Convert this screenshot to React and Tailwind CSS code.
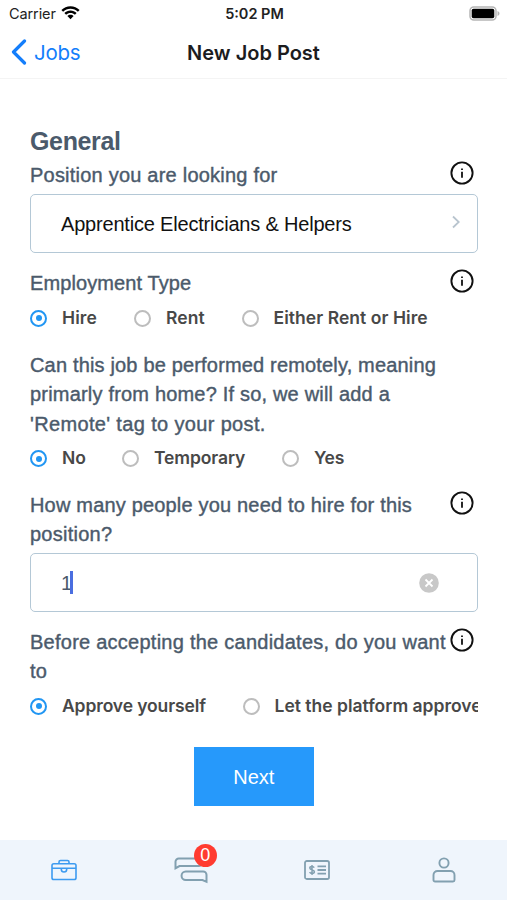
import React from 'react';

const labelText =
  "font-['Liberation_Sans',sans-serif] text-[20px] leading-[29.3px] text-[#4b5a6b] [-webkit-text-stroke:0.4px_#4b5a6b] whitespace-nowrap";

const InfoIcon = () => (
  <svg viewBox="0 0 24 24" className="w-6 h-6 shrink-0" fill="none" stroke="#111" strokeWidth="1.9">
    <circle cx="12" cy="12" r="10.6" />
    <path d="M12 10.8v6M12 7.4v1.6" strokeWidth="1.8" />
  </svg>
);

const Line = ({ text, spacing }) => (
  <span className="block" style={{ letterSpacing: spacing }}>{text}</span>
);

const Label = ({ lines, info, className }) => (
  <div className={`flex items-start justify-between ${className}`}>
    <p className={labelText}>
      {lines.map(([text, spacing]) => (
        <Line key={text} text={text} spacing={spacing} />
      ))}
    </p>
    {info && <div className="-ml-10 mr-[3.5px]"><InfoIcon /></div>}
  </div>
);

const Radio = ({ text, checked, width, spacing }) => (
  <label className="flex items-center shrink-0" style={{ width }}>
    <span
      className={`flex items-center justify-center w-[17px] h-[17px] rounded-full border-2 shrink-0 ${
        checked ? 'border-[#2196f3]' : 'border-[#bdbdbd]'
      }`}
    >
      {checked && <span className="w-[6px] h-[6px] rounded-full bg-[#2196f3]" />}
    </span>
    <span
      className="ml-[15px] font-['Inter',sans-serif] text-[17.5px] font-semibold text-[#484848] whitespace-nowrap"
      style={{ letterSpacing: spacing }}
    >
      {text}
    </span>
  </label>
);

const RadioRow = ({ options }) => (
  <div className="flex items-center h-10 overflow-hidden">
    {options.map((o) => (
      <Radio key={o.text} {...o} />
    ))}
  </div>
);

const StatusBar = () => (
  <div className="grid grid-cols-3 items-center h-7 pl-[9px] pr-[7px] font-['Inter',sans-serif] text-[14.5px] text-[#222]">
    <div className="flex items-center gap-[5px]">
      <span className="tracking-[-0.1px]">Carrier</span>
      <svg viewBox="0 0 19 14" className="w-[19px] h-[14px] -mt-[2px]" fill="#000">
        <path d="M9.5 .3C13 .3 16.2 1.7 18.6 4L16.9 5.8C15 3.9 12.3 2.8 9.5 2.8S4 3.9 2.1 5.8L.4 4C2.8 1.7 6 .3 9.5 .3z" />
        <path d="M9.5 4.5C11.900 4.500 14 5.500 15.600 7L13.900 8.700C12.700 7.600 11.200 7 9.500 7S6.300 7.600 5.100 8.700L3.400 7C5 5.500 7.100 4.500 9.500 4.500z" />
        <path d="M9.5 8.7C10.700 8.700 11.800 9.200 12.600 9.900L9.500 13.200 6.400 9.900C7.200 9.200 8.300 8.700 9.500 8.700z" />
      </svg>
    </div>
    <span className="text-center font-semibold">5:02 PM</span>
    <svg viewBox="0 0 31 15" className="w-[31px] h-[15px] -mt-[2px] justify-self-end">
      <rect x="1" y="1" width="26" height="13" rx="3.8" fill="#fff" stroke="#b5b5b5" strokeWidth="1.5" />
      <rect x="2.7" y="2.8" width="22.6" height="9.4" rx="1.8" fill="#000" />
      <path d="M28.500 5v5c1.200-.5 2-1.400 2-2.500s-.8-2-2-2.500z" fill="#b5b5b5" />
    </svg>
  </div>
);

const NavBar = () => (
  <div className="grid grid-cols-[1fr_auto_1fr] items-center h-[51px] px-[11px] pb-[2px] border-b border-[#f4f4f4] font-['Inter',sans-serif]">
    <div className="flex items-center gap-[7px] text-[#147efb]">
      <svg viewBox="0 0 16 26" className="w-4 h-[26px]" fill="none" stroke="currentColor" strokeWidth="3.2" strokeLinecap="round" strokeLinejoin="round">
        <path d="M13.500 2L2.500 13l11 11" />
      </svg>
      <span className="pt-[2px] text-[20.5px] tracking-[-0.3px]">Jobs</span>
    </div>
    <h1 className="pt-px text-[20px] font-semibold text-[#1c1c1e]">New Job Post</h1>
  </div>
);

const TabBar = () => (
  <div className="grid grid-cols-4 items-center h-[60px] pl-px bg-[#eff5fc] text-[#82a0b0]">
    <div className="flex justify-center">
      <svg viewBox="0 0 26 22" className="w-[26px] h-[22px] text-[#3d9bf0]" fill="none" stroke="currentColor" strokeWidth="1.6" strokeLinejoin="round">
        <rect x="1" y="4.8" width="24" height="15.7" rx="1.8" />
        <path d="M8 4.800V3a1.500 1.500 0 0 1 1.500-1.500h7A1.500 1.500 0 0 1 18 3v1.800M1 9.300h24M10.300 9.500v.8a2.700 2.700 0 0 0 5.400 0v-.8" />
      </svg>
    </div>
    <div className="flex justify-center">
      <div className="relative w-[34px] h-[28px]">
        <svg viewBox="0 0 34 28" className="w-[34px] h-[28px]" fill="none" stroke="currentColor" strokeWidth="2">
          <path d="M28 2.500H4.800A3.300 3.300 0 0 0 1.500 5.800v6.400L5.500 10H25a4 4 0 0 0 4-4" />
          <path d="M11.800 15.500h17.400a3.300 3.300 0 0 1 3.300 3.300v7L28.500 24H11.800a4.200 4.200 0 0 1 0-8.500z" />
        </svg>
        <span className="absolute -top-[12px] left-[20px] flex items-center justify-center w-[23px] h-[23px] rounded-full bg-[#ff3b30] font-['Liberation_Sans',sans-serif] text-[18px] text-white">
          0
        </span>
      </div>
    </div>
    <div className="flex justify-center">
      <svg viewBox="0 0 26 20" className="w-[26px] h-5" fill="none" stroke="currentColor" strokeWidth="1.8">
        <rect x="1" y="1" width="24" height="18" rx="1.8" />
        <path d="M13.500 6.300h8.500M13.500 10h8.500M13.500 13.700h8.500" />
        <path d="M10.200 7.600C9.800 6.800 9 6.500 8 6.500c-1.300 0-2.200.6-2.200 1.600 0 2.300 4.600 1.400 4.600 3.700 0 1-.9 1.700-2.300 1.700-1.200 0-2-.4-2.500-1.300M8 5v10" strokeWidth="1.5" />
      </svg>
    </div>
    <div className="flex justify-center">
      <svg viewBox="0 0 24 26" className="w-6 h-[26px]" fill="none" stroke="currentColor" strokeWidth="1.9">
        <circle cx="12" cy="6" r="4.6" />
        <path d="M5.500 14h13a4 4 0 0 1 4 4v5a1.500 1.500 0 0 1-1.500 1.500H3A1.500 1.500 0 0 1 1.500 23v-5a4 4 0 0 1 4-4z" />
      </svg>
    </div>
  </div>
);

const App = () => {
  return (
    <div className="flex flex-col w-full h-[900px] bg-white overflow-hidden">
      <StatusBar />
      <NavBar />

      <div className="flex-1 flex flex-col pl-[30px] pr-[29.5px] pt-[47px]">
        <h2 className="font-['Liberation_Sans',sans-serif] text-[25px] leading-[30px] font-bold tracking-[-0.35px] text-[#4b5a6b]">
          General
        </h2>

        <Label className="mt-[5px] h-[33px]" lines={[['Position you are looking for', '0.22px']]} info />
        <div className="flex items-center justify-between h-[59px] pl-[30px] pr-[17px] border border-[#b4c8d6] rounded-[5px] font-['Liberation_Sans',sans-serif] text-[20px] text-[#111]">
          <span className="tracking-[-0.19px]">Apprentice Electricians &amp; Helpers</span>
          <svg viewBox="0 0 8 14" className="w-2 h-[14px] -mt-[3px]" fill="none" stroke="#b8c4ce" strokeWidth="1.8">
            <path d="M1 1.500l5.800 5.500L1 12.500" />
          </svg>
        </div>

        <Label className="mt-[15px] h-[30px] pt-px" lines={[['Employment Type', '0.1px']]} info />
        <RadioRow
          options={[
            { text: 'Hire', checked: true, width: 104, spacing: '0.1px' },
            { text: 'Rent', width: 107.5, spacing: '0.1px' },
            { text: 'Either Rent or Hire', spacing: '0.05px' },
          ]}
        />

        <Label
          className="mt-[12px] h-[88.5px] pt-px"
          lines={[
            ['Can this job be performed remotely, meaning', '0.17px'],
            ['primarly from home? If so, we will add a', '0.19px'],
            ["'Remote' tag to your post.", '0.35px'],
          ]}
        />
        <RadioRow
          options={[
            { text: 'No', checked: true, width: 92, spacing: '0px' },
            { text: 'Temporary', width: 160, spacing: '-0.1px' },
            { text: 'Yes', spacing: '-0.2px' },
          ]}
        />

        <Label
          className="mt-[11.5px] h-[63px] pt-px"
          lines={[
            ['How many people you need to hire for this', '0.18px'],
            ['position?', '0.25px'],
          ]}
          info
        />
        <div className="flex items-center justify-between h-[59px] pl-[31px] pr-[38px] border border-[#b4c8d6] rounded-[5px] font-['Liberation_Sans',sans-serif] text-[20px] text-[#4b5a6b]">
          <div className="flex items-center">
            <span className="w-[8px] -ml-px mr-px">1</span>
            <span className="w-[2.5px] h-[23px] bg-[#4a6ee0]" />
          </div>
          <svg viewBox="0 0 20 20" className="w-5 h-5">
            <circle cx="10" cy="10" r="9.8" fill="#c8c8c8" />
            <path d="M6.500 6.500l7 7M13.500 6.500l-7 7" stroke="#fff" strokeWidth="1.8" />
          </svg>
        </div>

        <Label
          className="mt-[15px] h-[59px] pt-px"
          lines={[
            ['Before accepting the candidates, do you want', '0.25px'],
            ['to', '0.3px'],
          ]}
          info
        />
        <RadioRow
          options={[
            { text: 'Approve yourself', checked: true, width: 212.5, spacing: '-0.12px' },
            { text: 'Let the platform approve', spacing: '0px' },
          ]}
        />

        <button className="self-center mt-[21px] w-[120px] h-[59px] shrink-0 bg-[#2699fb] font-['Liberation_Sans',sans-serif] text-[20px] text-white">
          Next
        </button>
      </div>

      <TabBar />
    </div>
  );
};

export default App;
